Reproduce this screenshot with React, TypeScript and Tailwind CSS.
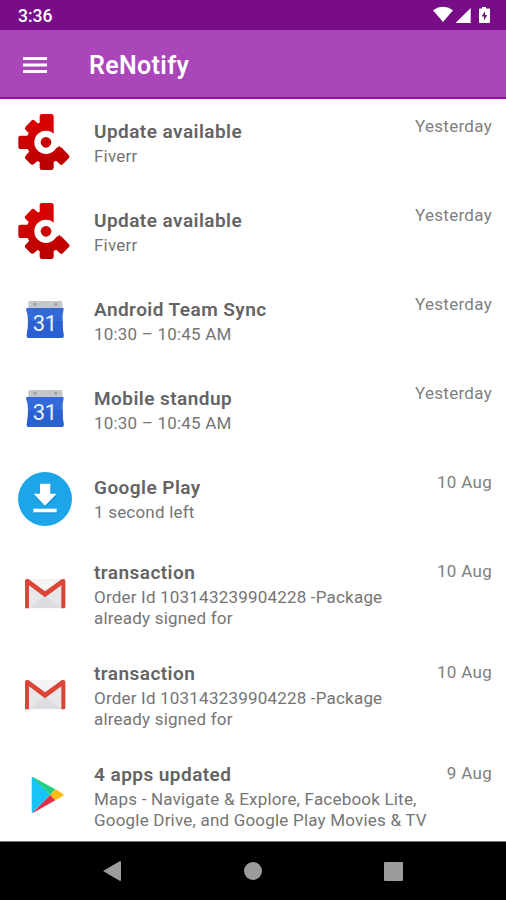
import { FC, ReactNode } from 'react'

const CrashIcon: FC = () => (
  <svg className="w-[54px] h-[54px] overflow-visible" viewBox="24 33 162 162">
    <defs>
      <linearGradient id="crash" x1="0" y1="0" x2="0" y2="1">
        <stop offset="0" stopColor="#de0000" />
        <stop offset="1" stopColor="#b80000" />
      </linearGradient>
    </defs>
    <path
      fill="url(#crash)"
      stroke="url(#crash)"
      strokeWidth="6"
      strokeLinejoin="round"
      d="M97 30H124Q128 30 128 34V84L148 129L153 130L174 152Q177 155 174 158L157 175Q154 178 151 175L138 163L128 170V188Q128 192 124 192H96Q92 192 92 188V170L82 164L70 175Q67 178 64 175L49 160Q46 157 49 154L61 141L55 129H33Q28 129 28 125V99Q28 95 33 95H54L60 83L49 73Q46 70 49 67L66 49Q69 46 72 49L83 59L92 55V34Q92 30 97 30Z"
    />
    <circle cx="108" cy="112" r="35" fill="#fff" />
    <path d="M131.500 84L155 110L147 124L139 130L128 112Z" fill="#fff" />
    <circle cx="108" cy="112" r="16" fill="#cb0000" />
  </svg>
)

const CalendarIcon: FC = () => (
  <svg className="w-[54px] h-[54px]" viewBox="24 27 162 162">
    <path d="M60 48H152Q157 48 157 53V70H55V53Q55 48 60 48Z" fill="#c4c6c9" />
    <circle cx="75" cy="58" r="5" fill="#a0a2a6" />
    <circle cx="137" cy="58" r="5" fill="#a0a2a6" />
    <path
      d="M52 69H158Q162 69 161 73Q156 92 158 108Q157 130 161 152Q161 159 155 159H57Q50 159 50 152Q55 130 54 108Q55 92 48 73Q48 69 52 69Z"
      fill="#3469d8"
    />
    <path d="M54 108H158Q157 130 161 152Q161 159 155 159H57Q50 159 50 152Q55 130 54 108Z" fill="#2a60d1" />
    <text
      x="105"
      y="138"
      textAnchor="middle"
      fontFamily="Roboto, sans-serif"
      fontSize="66"
      fill="#e9f1ff"
      textLength="73"
    >
      31
    </text>
  </svg>
)

const DownloadIcon: FC = () => (
  <svg className="w-[54px] h-[54px]" viewBox="24 21 162 162">
    <circle cx="105" cy="102" r="81" fill="#1ca5e8" />
    <path d="M89 57H121V87H141L105 123L70 87H89ZM70 132H140V143H70Z" fill="#0d82c0" transform="translate(2 3)" opacity=".5" />
    <path d="M90 56H121V86H140L105 122L71 86H90Z" fill="#fff" />
    <path d="M70 131H140V142H70Z" fill="#fff" />
  </svg>
)

const MailIcon: FC = () => (
  <svg className="w-[54px] h-[54px]" viewBox="24 21 162 162">
    <rect x="45" y="57" width="121" height="88" rx="6" fill="#e7e7e9" />
    <path d="M53 58H158L105 99Z" fill="#f4f4f4" />
    <path d="M58 144L105 106L153 144Z" fill="#dcdde0" />
    <path
      d="M45 145V63Q45 57 51 57H55L105 94L156 57H160Q166 57 166 63V140Q166 145 161 145H154V76L105 112L57 76V145Z"
      fill="#db4437"
    />
  </svg>
)

const PlayIcon: FC = () => (
  <svg className="w-[54px] h-[54px]" viewBox="24 27 162 162">
    <path d="M65 54Q65 50 69 52L121 104L69 157Q65 160 65 155Z" fill="#17c4f5" />
    <path d="M67 51Q69 50 73 53L136 88L121 104Z" fill="#20d080" />
    <path d="M67 159Q69 160 73 157L136 121L121 104Z" fill="#e0304a" />
    <path d="M136 88L159 101Q163 105 159 108L136 121L120 104Z" fill="#fbbc18" />
  </svg>
)

interface NotificationRowProps {
  icon: ReactNode
  title: string
  lines: string[]
  date: string
}

const NotificationRow: FC<NotificationRowProps> = ({ icon, title, lines, date }) => {
  const tall = lines.length > 1
  return (
    <li className={`flex shrink-0 pt-[18px] pl-[18px] pr-[14px] ${tall ? 'h-[101px]' : 'h-[89px]'}`}>
      <div className={tall ? 'pt-[6px]' : ''}>{icon}</div>
      <div className={`flex-1 pl-[22px] whitespace-nowrap ${tall ? '' : 'pt-[4px]'}`}>
        <h2 className="text-[19px] leading-6 font-semibold tracking-[0.45px] text-[#646464]">{title}</h2>
        <div className="pt-[2px]">
          {lines.map((line) => (
            <p key={line} className="text-[17px] leading-[20.5px] tracking-[0.2px] text-[#757575]">
              {line}
            </p>
          ))}
        </div>
      </div>
      <span className="h-5 text-[17px] leading-5 tracking-[0.3px] text-[#808080]">{date}</span>
    </li>
  )
}

const notifications: NotificationRowProps[] = [
  { icon: <CrashIcon />, title: 'Update available', lines: ['Fiverr'], date: 'Yesterday' },
  { icon: <CrashIcon />, title: 'Update available', lines: ['Fiverr'], date: 'Yesterday' },
  { icon: <CalendarIcon />, title: 'Android Team Sync', lines: ['10:30 – 10:45 AM'], date: 'Yesterday' },
  { icon: <CalendarIcon />, title: 'Mobile standup', lines: ['10:30 – 10:45 AM'], date: 'Yesterday' },
  { icon: <DownloadIcon />, title: 'Google Play', lines: ['1 second left'], date: '10 Aug' },
  {
    icon: <MailIcon />,
    title: 'transaction',
    lines: ['Order Id 103143239904228 -Package', 'already signed for'],
    date: '10 Aug',
  },
  {
    icon: <MailIcon />,
    title: 'transaction',
    lines: ['Order Id 103143239904228 -Package', 'already signed for'],
    date: '10 Aug',
  },
  {
    icon: <PlayIcon />,
    title: '4 apps updated',
    lines: ['Maps - Navigate & Explore, Facebook Lite,', 'Google Drive, and Google Play Movies & TV'],
    date: '9 Aug',
  },
]

const StatusBar: FC = () => (
  <div className="flex h-[30px] shrink-0 items-center justify-between bg-[#780d87] pl-[18px] pr-[15px] text-white">
    <span className="pt-[2px] text-[17.5px] leading-5 font-medium">3:36</span>
    <svg className="h-[18px] w-[58px]" viewBox="0 0 58 18" fill="#fff">
      <path d="M0 4.3Q10 -2.6 20 4.3L10 16Z" />
      <path d="M37.7 2V17H22.5Z" />
      <path
        fillRule="evenodd"
        d="M49 1H53V2.5H56Q57 2.5 57 3.5V16Q57 17 56 17H47Q46 17 46 16V3.5Q46 2.5 47 2.5H49ZM52 5L48.7 10.5H51V14.5L54.3 9H52Z"
      />
    </svg>
  </div>
)

const Toolbar: FC = () => (
  <header className="flex h-[69px] shrink-0 items-center border-b-2 border-[#980ca4] bg-[#ab45ba] pt-[2px] pl-[23px] text-white">
    <svg className="h-[18px] w-6" viewBox="0 0 24 18" fill="#fff">
      <path d="M0 1H24V4H0ZM0 7.5H24V10.5H0ZM0 14H24V17H0Z" />
    </svg>
    <h1 className="pl-[42px] pt-[3px] text-[25px] leading-8 font-semibold tracking-[0.35px]">ReNotify</h1>
  </header>
)

const NavigationBar: FC = () => (
  <nav className="flex h-[59px] shrink-0 items-center gap-[122px] border-t border-[#777] bg-black pl-[102px]">
    <svg className="h-[22px] w-5" viewBox="0 0 20 22">
      <path d="M1 11L18 1Q19 1 19 2V20Q19 21 18 21Z" fill="#9c9c9c" />
    </svg>
    <div className="size-[18px] rounded-full bg-[#9c9c9c]" />
    <div className="size-[19px] rounded-[1px] bg-[#9c9c9c]" />
  </nav>
)

const App: FC = () => {
  return (
    <div className="flex h-[900px] w-[506px] flex-col overflow-hidden bg-white font-['Roboto',sans-serif]">
      <StatusBar />
      <Toolbar />
      <ul className="-mt-px flex min-h-0 flex-1 flex-col overflow-hidden">
        {notifications.map((item, index) => (
          <NotificationRow key={index} {...item} />
        ))}
      </ul>
      <NavigationBar />
    </div>
  )
}

export default App
